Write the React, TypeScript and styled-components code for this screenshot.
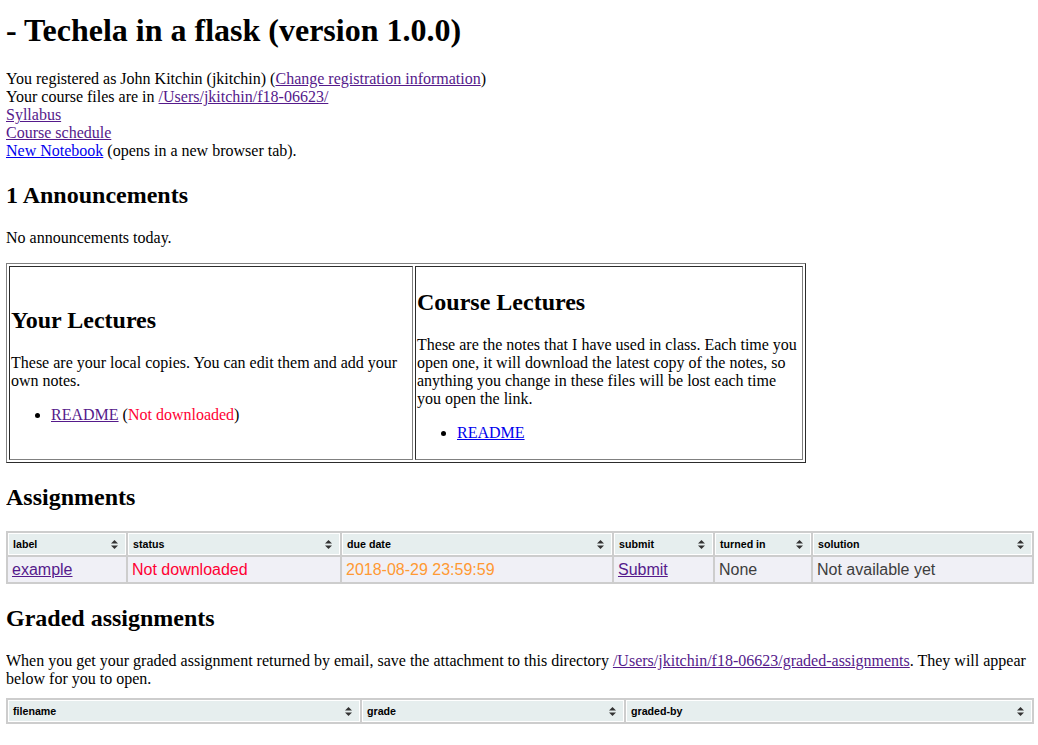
import React from "react";
import styled, { createGlobalStyle } from "styled-components";

const Global = createGlobalStyle`
  html, body { background: #fff; }
  body {
    margin: 0 4px 0 6px;
    font-family: "Liberation Serif", "Times New Roman", serif;
    font-size: 16px;
    line-height: 18px;
    color: #000;
  }
`;

const Title = styled.h1`
  font-size: 32px;
  line-height: 37px;
  font-weight: bold;
  margin: 12px 0 21px;
`;

const Heading = styled.h2<{ $top?: number; $bottom?: number }>`
  font-size: 24px;
  line-height: 28px;
  font-weight: bold;
  margin: ${(p) => (p.$top ?? 20)}px 0 ${(p) => (p.$bottom ?? 20)}px;
`;

const InfoBlock = styled.div`
  display: flex;
  flex-direction: column;
  align-items: flex-start;
`;

const Para = styled.p<{ $bottom?: number }>`
  margin: 0 0 ${(p) => (p.$bottom ?? 16)}px;
`;

const Link = styled.a<{ $fresh?: boolean }>`
  color: ${(p) => (p.$fresh ? "#0000ee" : "#551a8b")};
  text-decoration: underline;
  cursor: pointer;
`;

const Warn = styled.span`
  color: #ff0033;
`;

const LectureTable = styled.table`
  width: 800px;
  border: 1px outset grey;
  border-spacing: 2px;
  border-collapse: separate;
  margin: 0;
`;

const LectureCell = styled.td<{ $w: number }>`
  width: ${(p) => p.$w}px;
  border: 1px inset grey;
  padding: 1px;
  vertical-align: middle;
`;

const BulletList = styled.ul`
  margin: 16px 0;
  padding-left: 40px;
  list-style: disc;
`;

const SortTable = styled.table<{ $top?: number }>`
  width: 100%;
  background-color: #cdcdcd;
  border-collapse: separate;
  border-spacing: 2px;
  border: 0;
  margin: ${(p) => p.$top ?? 10}px 0 15px;
  text-align: left;
  font-family: "Liberation Sans", Arial, sans-serif;
`;

const HeadCell = styled.th<{ $w?: number }>`
  background-color: #e6eeee;
  border: 1px solid #fff;
  font-size: 8pt;
  line-height: 12px;
  font-weight: bold;
  padding: 4px;
  color: #000;
  ${(p) => (p.$w ? `width: ${p.$w}px;` : "")}
`;

const HeadInner = styled.div`
  display: flex;
  align-items: center;
  justify-content: space-between;
  padding-right: 3px;
`;

const BodyCell = styled.td<{ $color?: string }>`
  background-color: #f0f0f6;
  color: ${(p) => p.$color ?? "#3d3d3d"};
  font-size: 16px;
  line-height: 17px;
  padding: 4px;
  vertical-align: top;
`;

const SortIcon = () => (
  <svg width="7" height="9" viewBox="0 0 7 9" aria-hidden="true">
    <polygon points="3.5,0 7,3.5 0,3.5" fill="#333" />
    <polygon points="0,5.5 7,5.5 3.5,9" fill="#333" />
  </svg>
);

const Th = ({ label, w }: { label: string; w?: number }) => (
  <HeadCell $w={w}>
    <HeadInner>
      <span>{label}</span>
      <SortIcon />
    </HeadInner>
  </HeadCell>
);

export default function App() {
  return (
    <>
      <Global />
      <Title>- Techela in a flask (version 1.0.0)</Title>
      <InfoBlock>
        <span>
          You registered as John Kitchin (jkitchin) (<Link>Change registration information</Link>)
        </span>
        <span>
          Your course files are in <Link>/Users/jkitchin/f18-06623/</Link>
        </span>
        <Link>Syllabus</Link>
        <Link>Course schedule</Link>
        <span>
          <Link $fresh>New Notebook</Link> (opens in a new browser tab).
        </span>
      </InfoBlock>

      <Heading $top={21}>1 Announcements</Heading>
      <Para $bottom={16}>No announcements today.</Para>

      <LectureTable>
        <tbody>
          <tr>
            <LectureCell $w={400}>
              <Heading>Your Lectures</Heading>
              <Para>These are your local copies. You can edit them and add your own notes.</Para>
              <BulletList>
                <li>
                  <Link>README</Link> (<Warn>Not downloaded</Warn>)
                </li>
              </BulletList>
            </LectureCell>
            <LectureCell $w={384}>
              <Heading>Course Lectures</Heading>
              <Para>
                These are the notes that I have used in class. Each time you open one, it will
                download the latest copy of the notes, so anything you change in these files will
                be lost each time you open the link.
              </Para>
              <BulletList>
                <li>
                  <Link $fresh>README</Link>
                </li>
              </BulletList>
            </LectureCell>
          </tr>
        </tbody>
      </LectureTable>

      <Heading $top={20}>Assignments</Heading>
      <SortTable $top={0}>
        <thead>
          <tr>
            <Th label="label" w={108} />
            <Th label="status" w={202} />
            <Th label="due date" w={260} />
            <Th label="submit" w={89} />
            <Th label="turned in" w={86} />
            <Th label="solution" />
          </tr>
        </thead>
        <tbody>
          <tr>
            <BodyCell>
              <Link>example</Link>
            </BodyCell>
            <BodyCell $color="#ff0033">Not downloaded</BodyCell>
            <BodyCell $color="#ff9933">2018-08-29 23:59:59</BodyCell>
            <BodyCell>
              <Link>Submit</Link>
            </BodyCell>
            <BodyCell>None</BodyCell>
            <BodyCell>Not available yet</BodyCell>
          </tr>
        </tbody>
      </SortTable>

      <Heading $top={20}>Graded assignments</Heading>
      <Para $bottom={10}>
        When you get your graded assignment returned by email, save the attachment to this
        directory <Link>/Users/jkitchin/f18-06623/graded-assignments</Link>. They will appear
        below for you to open.
      </Para>
      <SortTable $top={0}>
        <thead>
          <tr>
            <Th label="filename" w={342} />
            <Th label="grade" w={252} />
            <Th label="graded-by" />
          </tr>
        </thead>
        <tbody />
      </SortTable>
    </>
  );
}
